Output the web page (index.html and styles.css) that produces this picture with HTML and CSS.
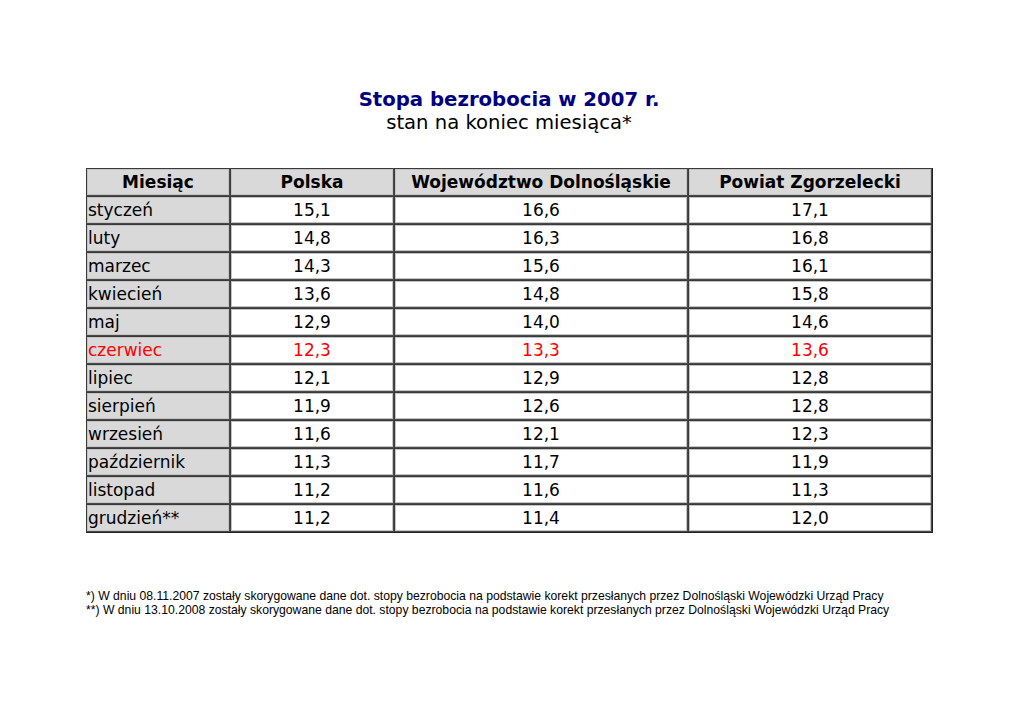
FILE: index.html
```html
<!DOCTYPE html>
<html lang="pl">
<head>
<meta charset="utf-8">
<title>Stopa bezrobocia w 2007 r.</title>
<link rel="stylesheet" href="styles.css">
</head>
<body>
<div class="page">
  <header class="heading">
    <div class="title">Stopa bezrobocia w 2007 r.</div>
    <div class="subtitle">stan na koniec miesiąca*</div>
  </header>
  <table class="data">
    <colgroup>
      <col class="c1"><col class="c2"><col class="c3"><col class="c4">
    </colgroup>
    <thead>
      <tr><th>Miesiąc</th><th>Polska</th><th>Województwo Dolnośląskie</th><th>Powiat Zgorzelecki</th></tr>
    </thead>
    <tbody>
      <tr><td class="m">styczeń</td><td>15,1</td><td>16,6</td><td>17,1</td></tr>
      <tr><td class="m">luty</td><td>14,8</td><td>16,3</td><td>16,8</td></tr>
      <tr><td class="m">marzec</td><td>14,3</td><td>15,6</td><td>16,1</td></tr>
      <tr><td class="m">kwiecień</td><td>13,6</td><td>14,8</td><td>15,8</td></tr>
      <tr><td class="m">maj</td><td>12,9</td><td>14,0</td><td>14,6</td></tr>
      <tr class="hl"><td class="m">czerwiec</td><td>12,3</td><td>13,3</td><td>13,6</td></tr>
      <tr><td class="m">lipiec</td><td>12,1</td><td>12,9</td><td>12,8</td></tr>
      <tr><td class="m">sierpień</td><td>11,9</td><td>12,6</td><td>12,8</td></tr>
      <tr><td class="m">wrzesień</td><td>11,6</td><td>12,1</td><td>12,3</td></tr>
      <tr><td class="m">październik</td><td>11,3</td><td>11,7</td><td>11,9</td></tr>
      <tr><td class="m">listopad</td><td>11,2</td><td>11,6</td><td>11,3</td></tr>
      <tr><td class="m">grudzień**</td><td>11,2</td><td>11,4</td><td>12,0</td></tr>
    </tbody>
  </table>
  <div class="notes">
    <p>*) W dniu 08.11.2007 zostały skorygowane dane dot. stopy bezrobocia na podstawie korekt przesłanych przez Dolnośląski Wojewódzki Urząd Pracy</p>
    <p>**) W dniu 13.10.2008 zostały skorygowane dane dot. stopy bezrobocia na podstawie korekt przesłanych przez Dolnośląski Wojewódzki Urząd Pracy</p>
  </div>
</div>
</body>
</html>
```
FILE: styles.css
```css
html, body {
  margin: 0;
  padding: 0;
  background: #ffffff;
}
.page {
  width: 1024px;
  height: 724px;
  padding: 88px 0 0 86px;
  box-sizing: border-box;
  font-family: "DejaVu Sans", Verdana, sans-serif;
  color: #000;
}
.heading {
  width: 846px;
  text-align: center;
  line-height: 23px;
  margin-bottom: 34px;
}
.title {
  font-size: 19.7px;
  font-weight: bold;
  color: #000080;
}
.subtitle {
  font-size: 19.6px;
}
.data {
  border-collapse: separate;
  border-spacing: 0;
  table-layout: fixed;
  width: 846px;
  border-right: 1px solid #222;
  border-bottom: 1px solid #222;
  font-size: 17px;
}
.c1 { width: 144px; }
.c2 { width: 164px; }
.c3 { width: 294px; }
.c4 { width: 244px; }
.data th, .data td {
  height: 28px;
  padding: 0;
  box-sizing: border-box;
  border-top: 1px solid #3a3a3a;
  border-left: 1px solid #3a3a3a;
  border-right: 1px solid #4a4a4a;
  border-bottom: 1px solid #4a4a4a;
  box-shadow: inset 1px 1px 0 #c4c4c4, inset -1px -1px 0 #c4c4c4;
  text-align: center;
  vertical-align: middle;
  line-height: 20px;
  white-space: nowrap;
}
.data th {
  background: #d9d9d9;
  font-weight: bold;
}
.data td.m {
  background: #d9d9d9;
  text-align: left;
  padding-left: 1px;
}
.data tr.hl td {
  color: #ff0000;
}
.notes {
  margin-top: 56px;
  font-family: "Liberation Sans", Arial, sans-serif;
  font-size: 12.2px;
  line-height: 14px;
}
.notes p {
  margin: 0;
}
```
